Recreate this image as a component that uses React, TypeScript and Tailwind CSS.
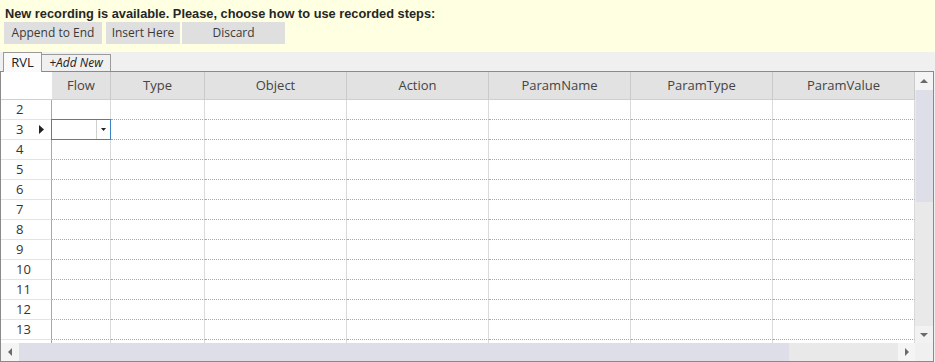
const columns = [
  { name: "Flow", width: "w-[59px]" },
  { name: "Type", width: "w-[94px]" },
  { name: "Object", width: "w-[142px]" },
  { name: "Action", width: "w-[142px]" },
  { name: "ParamName", width: "w-[142px]" },
  { name: "ParamType", width: "w-[142px]" },
  { name: "ParamValue", width: "w-[142px]" },
];

// row 14 only peeks out above the scrollbar, so it carries no number
const rows = [2, 3, 4, 5, 6, 7, 8, 9, 10, 11, 12, 13, 14];

function Arrow({ dir }: { dir: "up" | "down" | "left" | "right" }) {
  const points = {
    up: "0,4 4,0 8,4",
    down: "0,0 8,0 4,4",
    left: "4,0 4,8 0,4",
    right: "0,0 0,8 4,4",
  }[dir];
  const box = dir === "up" || dir === "down" ? "0 0 8 4" : "0 0 4 8";
  const size = dir === "up" || dir === "down" ? "h-[4px] w-[8px]" : "h-[8px] w-[4px]";
  return (
    <svg aria-hidden="true" viewBox={box} className={size}>
      <polygon points={points} fill="#6a6a6a" />
    </svg>
  );
}

export default function App() {
  return (
    <div className="flex h-[362px] w-[935px] flex-col bg-[#f0f0f0] font-['Open_Sans',sans-serif] text-[12px] text-[#333]">
      {/* recording banner */}
      <div className="h-[52px] bg-[#ffffe1] pl-[5px] pt-[5px]">
        <div className="h-[17px] font-['Liberation_Sans',sans-serif] text-[12.8px] font-bold leading-[17px] text-[#262626]">
          New recording is available. Please, choose how to use recorded steps:
        </div>
        <div className="flex">
          <button className="-ml-[1px] h-[22px] w-[98px] bg-[#dfdfdf] leading-[22px] text-[#3a3a3a]">Append to End</button>
          <button className="ml-[4px] h-[22px] w-[74px] bg-[#dfdfdf] leading-[22px] text-[#3a3a3a]">Insert Here</button>
          <button className="ml-[2px] h-[22px] w-[103px] bg-[#dfdfdf] leading-[22px] text-[#3a3a3a]">Discard</button>
        </div>
      </div>

      {/* tabs */}
      <div className="flex h-[19px] items-end pl-[3px]">
        <div className="relative z-10 -mb-[1px] flex h-[20px] w-[39px] items-center justify-center border border-b-0 border-[#9a9a9a] bg-[#fafafa] text-[13px] text-[#222]">
          RVL
        </div>
        <div className="flex h-[17px] w-[69px] items-center justify-center border border-b-0 border-l-0 border-[#9a9a9a] text-[12px] italic text-[#222]">
          +Add New
        </div>
      </div>

      {/* grid */}
      <div className="flex h-[291px] w-[934px] flex-col border border-[#8a8a8a]">
        <div className="flex min-h-0 flex-1">
          <div className="flex min-w-0 flex-1 flex-col overflow-hidden bg-white">
            <div className="flex h-[28px] shrink-0 border-b border-[#cfcfcf]">
              <div className="w-[51px] shrink-0 bg-white" />
              {columns.map((col) => (
                <div
                  key={col.name}
                  className={`${col.width} flex shrink-0 items-center justify-center border-r border-[#cacaca] bg-[#e2e2e2] text-[13px] text-[#444]`}
                >
                  {col.name}
                </div>
              ))}
            </div>
            {rows.map((n) => (
              <div key={n} className="flex h-[20px] shrink-0">
                <div className="relative flex w-[51px] shrink-0 items-center border-b border-r border-b-[#e4e4e4] border-r-[#a8a8a8] border-r-dotted pl-[15px] text-[13px] text-[#333]">
                  {n < 14 ? n : ""}
                  {n === 3 && (
                    <svg aria-hidden="true" viewBox="0 0 5 9" className="absolute left-[38px] top-[5px] h-[9px] w-[5px]">
                      <polygon points="0,0 5,4.5 0,9" fill="#222" />
                    </svg>
                  )}
                </div>
                {columns.map((col, i) => (
                  <div
                    key={col.name}
                    className={`${col.width} relative shrink-0 border-b border-r border-dotted border-b-[#a8a8a8] border-r-[#dadada] [border-right-style:solid]`}
                  >
                    {n === 3 && i === 0 && (
                      <div className="absolute -left-[1px] -top-[1px] flex h-[21px] w-[60px] justify-end border border-[#3a85c6] bg-white">
                        <div className="flex w-[14px] items-center justify-center border-l border-[#d0d0d0]">
                          <svg aria-hidden="true" viewBox="0 0 5 3" className="h-[3px] w-[5px]">
                            <polygon points="0,0 5,0 2.5,3" fill="#222" />
                          </svg>
                        </div>
                      </div>
                    )}
                  </div>
                ))}
              </div>
            ))}
          </div>
          {/* vertical scrollbar */}
          <div className="flex w-[18px] shrink-0 flex-col bg-[#e9e9e9]">
            <div className="flex h-[18px] items-center justify-center bg-[#f4f4f4]">
              <Arrow dir="up" />
            </div>
            <div className="ml-[1px] h-[112px] bg-[#dedee8]" />
            <div className="flex-1" />
            <div className="flex h-[17px] items-center justify-center bg-[#f2f2f2]">
              <Arrow dir="down" />
            </div>
          </div>
        </div>
        {/* horizontal scrollbar */}
        <div className="flex h-[18px] shrink-0">
          <div className="flex w-[18px] items-center justify-center bg-[#f4f4f4]">
            <Arrow dir="left" />
          </div>
          <div className="w-[770px] bg-[#dedee8]" />
          <div className="w-[109px] bg-[#e9e9e9]" />
          <div className="flex w-[17px] items-center justify-center bg-[#f4f4f4]">
            <Arrow dir="right" />
          </div>
          <div className="flex-1 bg-[#f0f0f0]" />
        </div>
      </div>
    </div>
  );
}
